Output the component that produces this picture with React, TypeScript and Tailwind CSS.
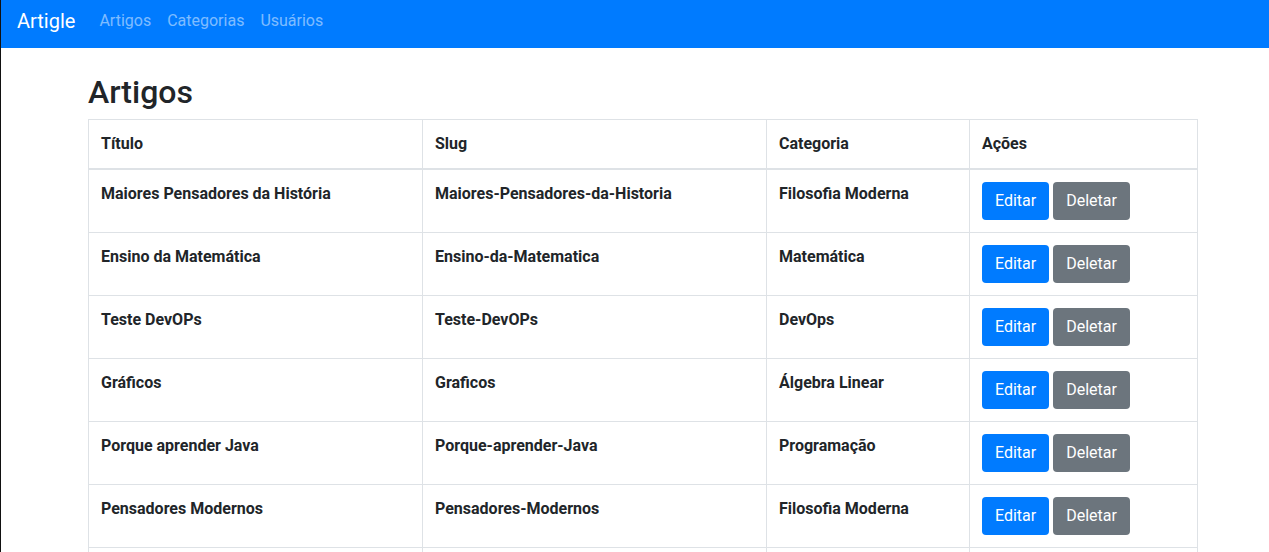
const artigos = [
  { titulo: "Maiores Pensadores da História", slug: "Maiores-Pensadores-da-Historia", categoria: "Filosofia Moderna" },
  { titulo: "Ensino da Matemática", slug: "Ensino-da-Matematica", categoria: "Matemática" },
  { titulo: "Teste DevOPs", slug: "Teste-DevOPs", categoria: "DevOps" },
  { titulo: "Gráficos", slug: "Graficos", categoria: "Álgebra Linear" },
  { titulo: "Porque aprender Java", slug: "Porque-aprender-Java", categoria: "Programação" },
  { titulo: "Pensadores Modernos", slug: "Pensadores-Modernos", categoria: "Filosofia Moderna" },
  { titulo: "Introdução ao Cálculo", slug: "Introducao-ao-Calculo", categoria: "Matemática" },
];

export default function App() {
  return (
    <div className="min-h-screen bg-white border-l border-[#111] text-[#212529] font-['Roboto','Liberation_Sans',sans-serif] text-base leading-6">
      {/* Navbar */}
      <nav className="h-12 bg-[#007bff] flex items-center px-4 pb-[6px]">
        <a href="#" className="text-white text-xl leading-[30px] mr-6">
          Artigle
        </a>
        <div className="flex">
          <a href="#" className="text-white/50 px-2 first:pl-0">
            Artigos
          </a>
          <a href="#" className="text-white/50 px-2">
            Categorias
          </a>
          <a href="#" className="text-white/50 px-2">
            Usuários
          </a>
        </div>
      </nav>

      {/* Content */}
      <div className="ml-[87px] w-[1110px] pt-[25px]">
        <h1 className="text-[32px] leading-[38px] font-medium mb-2">Artigos</h1>
        <table className="w-full border-collapse border border-[#dee2e6]">
          <thead>
            <tr>
              <th className="w-[334px] text-left font-bold p-3 border border-[#dee2e6] border-b-2">Título</th>
              <th className="w-[344px] text-left font-bold p-3 border border-[#dee2e6] border-b-2">Slug</th>
              <th className="w-[203px] text-left font-bold p-3 border border-[#dee2e6] border-b-2">Categoria</th>
              <th className="text-left font-bold p-3 border border-[#dee2e6] border-b-2">Ações</th>
            </tr>
          </thead>
          <tbody>
            {artigos.map((a) => (
              <tr key={a.slug}>
                <td className="align-top font-bold p-3 border border-[#dee2e6]">{a.titulo}</td>
                <td className="align-top font-bold p-3 border border-[#dee2e6]">{a.slug}</td>
                <td className="align-top font-bold p-3 border border-[#dee2e6]">{a.categoria}</td>
                <td className="align-top p-3 border border-[#dee2e6]">
                  <div className="flex gap-1">
                    <button className="h-[38px] px-[13px] rounded bg-[#007bff] text-white">Editar</button>
                    <button className="h-[38px] px-[13px] rounded bg-[#6c757d] text-white">Deletar</button>
                  </div>
                </td>
              </tr>
            ))}
          </tbody>
        </table>
      </div>
    </div>
  );
}
